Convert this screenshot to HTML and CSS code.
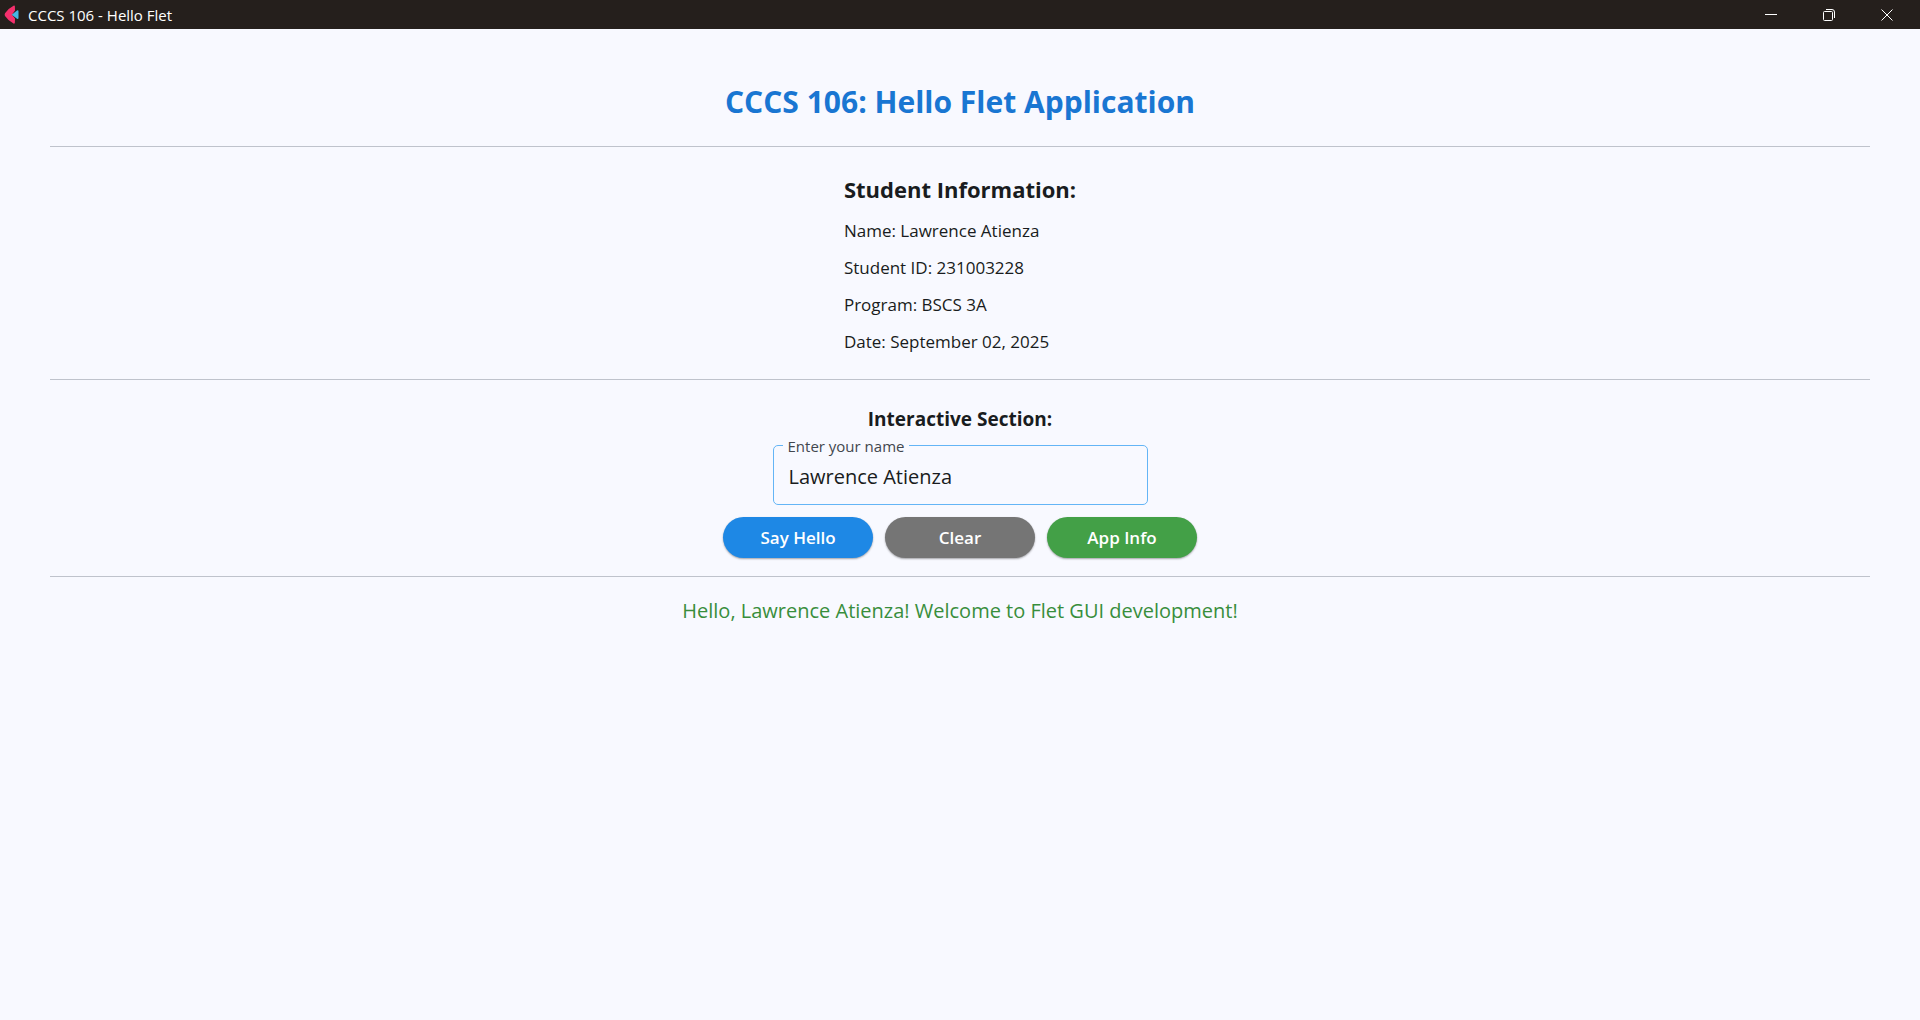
FILE: index.html
```html
<!DOCTYPE html>
<html lang="en">
<head>
<meta charset="utf-8">
<title>CCCS 106 - Hello Flet</title>
<link rel="stylesheet" href="styles.css">
</head>
<body>
<header class="titlebar">
  <svg class="logo" width="16" height="20" viewBox="0 0 16 20" aria-hidden="true">
    <path d="M9.500 .7Q10.800 .2 10.900 1.500L11 5.500L8 9.700L11 13.500L10.900 17.500Q10.800 19 9.500 18.500Q4 15.500 1 11Q.3 9.700 1 8.300Q4 3.500 9.500 .7Z" fill="#f4306d"/>
    <path d="M7.700 9.700L13 5.500Q14.500 4.800 14.500 6.500V12.700Q14.500 14.500 13 13.800Z" fill="#45b5e3"/>
  </svg>
  <span class="caption">CCCS 106 - Hello Flet</span>
  <div class="window-controls">
    <button class="window-button" type="button" aria-label="Minimize">
      <svg width="12" height="12" viewBox="0 0 12 12"><path d="M0 5.500H12"/></svg>
    </button>
    <button class="window-button" type="button" aria-label="Restore">
      <svg width="12" height="12" viewBox="0 0 12 12"><rect x=".5" y="2.500" width="9" height="9" rx="1"/><path d="M3 .5H9Q11.500 .5 11.500 3V9"/></svg>
    </button>
    <button class="window-button" type="button" aria-label="Close">
      <svg width="12" height="12" viewBox="0 0 12 12"><path d="M.5 .5L11.500 11.500M11.500 .5L.5 11.500"/></svg>
    </button>
  </div>
</header>
<main class="page">
  <h1 class="title">CCCS 106: Hello Flet Application</h1>
  <hr class="divider">
  <section class="info">
    <h2 class="info-title">Student Information:</h2>
    <p class="info-row">Name: Lawrence Atienza</p>
    <p class="info-row">Student ID: 231003228</p>
    <p class="info-row">Program: BSCS 3A</p>
    <p class="info-row">Date: September 02, 2025</p>
  </section>
  <hr class="divider">
  <section class="interactive">
    <h2 class="section-title">Interactive Section:</h2>
    <div class="field">
      <label class="field-label" for="name">Enter your name</label>
      <input class="field-input" id="name" type="text" value="Lawrence Atienza">
    </div>
    <div class="actions">
      <button class="button button-hello" type="button">Say Hello</button>
      <button class="button button-clear" type="button">Clear</button>
      <button class="button button-info" type="button">App Info</button>
    </div>
  </section>
  <hr class="divider divider-compact">
  <p class="greeting">Hello, Lawrence Atienza! Welcome to Flet GUI development!</p>
</main>
</body>
</html>
```
FILE: styles.css
```css
* {
  box-sizing: border-box;
}

body {
  margin: 0;
  min-height: 100vh;
  background: #f8f9ff;
  color: #191c20;
  font-family: "Segoe UI", "Open Sans", "Noto Sans", sans-serif;
}

h1, h2, p {
  margin: 0;
}

.titlebar {
  display: flex;
  align-items: center;
  height: 29px;
  padding-left: 4px;
  background: #251f1c;
  color: #fff;
}

.logo {
  margin-right: 8px;
}

.caption {
  font-size: 15px;
  line-height: 20px;
}

.window-controls {
  display: flex;
  align-self: stretch;
  margin-left: auto;
  padding-right: 4px;
}

.window-button {
  display: flex;
  align-items: center;
  justify-content: center;
  width: 58px;
  padding: 0;
  border: 0;
  background: none;
}

.window-button svg {
  fill: none;
  stroke: #fff;
}

.page {
  display: flex;
  flex-direction: column;
  align-items: center;
  padding: 53px 50px;
}

.title {
  color: #1976d2;
  font-size: 30px;
  line-height: 40px;
}

.divider {
  width: 100%;
  height: 1px;
  margin: 24px 0;
  border: 0;
  background: #bfc3cc;
}

.divider-compact {
  margin: 18px 0 20px;
}

.info {
  display: flex;
  flex-direction: column;
  gap: 10px;
}

.info-title {
  font-size: 22px;
  line-height: 36px;
}

.info-row {
  font-size: 17px;
  line-height: 27px;
}

.interactive {
  display: flex;
  flex-direction: column;
  align-items: center;
}

.section-title {
  margin-bottom: 11px;
  font-size: 19px;
  line-height: 30px;
}

.field {
  position: relative;
  width: 375px;
  margin-bottom: 12px;
}

.field-label {
  position: absolute;
  top: -9px;
  left: 10px;
  padding: 0 5px;
  background: #f8f9ff;
  color: #42474e;
  font-size: 15px;
  line-height: 20px;
}

.field-input {
  display: block;
  width: 100%;
  height: 60px;
  padding: 3px 15px 0;
  border: 1px solid #64b5f6;
  border-radius: 5px;
  outline: 0;
  background: none;
  color: inherit;
  font: inherit;
  font-size: 20px;
}

.actions {
  display: flex;
  gap: 12px;
}

.button {
  width: 150px;
  height: 41px;
  padding: 0;
  border: 0;
  border-radius: 21px;
  box-shadow: 0 1px 2px rgba(0, 0, 0, .35);
  color: #fff;
  font: inherit;
  font-size: 17px;
  font-weight: 600;
}

.button-hello {
  background: #1e88e5;
}

.button-clear {
  background: #757575;
}

.button-info {
  background: #43a047;
}

.greeting {
  color: #388e3c;
  font-size: 20px;
  line-height: 27px;
}
```
